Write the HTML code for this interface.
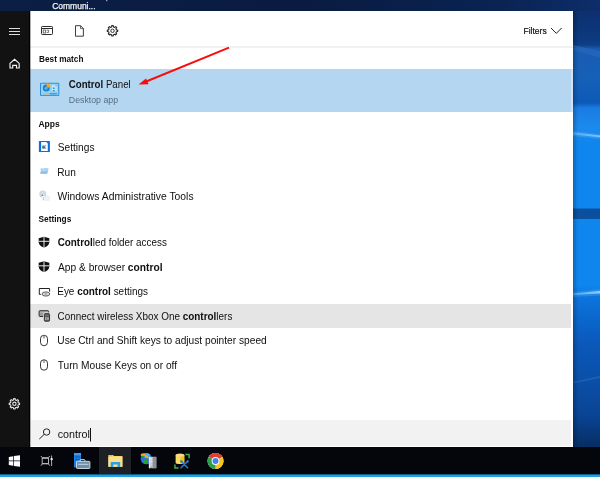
<!DOCTYPE html>
<html><head><meta charset="utf-8"><title>Search</title>
<style>
*{box-sizing:border-box;margin:0;padding:0}
html,body{width:600px;height:477px;overflow:hidden;background:#0a3f8f}
body{position:relative;font-family:"Liberation Sans",sans-serif;color:#1b1b1b}
.abs{position:absolute}
#desk{left:0;top:0;width:600px;height:477px;background:linear-gradient(180deg,#0c2e6a 0px,#0c3070 12px,#0c3a80 40px,#0d4088 45px,#1a5cb2 49px,#1560b8 80px,#0c5ab6 103px,#1a7ce2 108px,#1c8aee 128px,#0f86ee 142px,#0e86ee 285px,#0c72da 300px,#0a60c4 330px,#0a58b8 345px,#0b4fa8 380px,#0a4494 415px,#072d64 447px)}
#topband{left:0;top:0;width:600px;height:11px;background:linear-gradient(90deg,#0b1e44 0,#091b40 300px,#0a2352 500px,#0c2b64 573px,#0c2e6a 600px)}
#side{left:0;top:11px;width:30px;height:437px;background:#121212}
#panel{left:30px;top:11px;width:543px;height:436px;background:#fff}
#sep{left:30px;top:46px;width:543px;height:2px;background:#f1f1f1}
#best{left:30px;top:69px;width:543px;height:43px;background:linear-gradient(90deg,#b4d6f1 0,#b4d6f1 541px,#cfe3f5 541px)}
#hov{left:30px;top:304px;width:541px;height:24px;background:#e5e5e5}
#search{left:30px;top:420px;width:541px;height:26px;background:#f2f2f2;border-left:1px solid #fbfbfb}
#task{left:0;top:447px;width:600px;height:28px;background:#04060c}
#taskhl{left:99px;top:447px;width:32px;height:27px;background:#1d2126}
#bline{left:0;top:474px;width:600px;height:3px;background:linear-gradient(180deg,#0f5f8c 0,#0f5f8c 1px,#1aa3ea 1px)}
#ic{position:absolute;left:0;top:0;will-change:transform}
.t{position:absolute;white-space:nowrap;transform-origin:0 50%;will-change:transform}
b{font-weight:bold}
#ic text{font-family:"Liberation Sans",sans-serif;white-space:pre}

</style></head><body>
<div id="desk" class="abs"></div>
<div id="topband" class="abs"></div>
<div id="side" class="abs"></div>
<div id="panel" class="abs"></div>
<div id="sep" class="abs"></div>
<div id="best" class="abs"></div>
<div id="hov" class="abs"></div>
<div id="search" class="abs"></div>
<div id="task" class="abs"></div>
<div id="taskhl" class="abs"></div>
<div id="bline" class="abs"></div>
<svg id="ic" width="600" height="477" viewBox="0 0 600 477">
<!-- desktop rays on right strip -->
<defs>
<linearGradient id="sh1" x1="0" x2="1" y1="0" y2="0"><stop offset="0" stop-color="#000" stop-opacity=".22"/><stop offset="1" stop-color="#000" stop-opacity="0"/></linearGradient>
<linearGradient id="ry" x1="0" x2="1" y1="0" y2="0"><stop offset="0" stop-color="#6fbcf8" stop-opacity=".75"/><stop offset="1" stop-color="#bfe2fd" stop-opacity=".95"/></linearGradient>
</defs>
<g>
<path d="M573 45 L600 51 V58 L573 50Z" fill="#2a6cc0" opacity=".55"/>
<rect x="573" y="208.5" width="27" height="10.5" fill="#0a509f"/>
<path d="M573 132.2 L600 135.4 V137.2 L573 134.4Z" fill="url(#ry)"/>
<path d="M573 131 L600 134 V139 L573 136Z" fill="#4aa6f4" opacity=".45"/>
<path d="M573 293.6 L600 290.8 V293.4 L573 295Z" fill="url(#ry)"/>
<path d="M573 292 L600 289 V295.5 L573 297Z" fill="#4aa6f4" opacity=".35"/>
<path d="M573 382 L600 376 V378 L573 383.2Z" fill="#3f80d0" opacity=".35"/>
<rect x="573" y="11" width="5" height="436" fill="url(#sh1)"/>
</g>
<!-- sidebar icons -->
<rect x="30" y="11" width="1" height="436" fill="#000" opacity=".3"/>
<rect x="106.3" y="0" width="1" height="1.2" fill="#cfd3da"/>
<rect x="29" y="11" width="1" height="437" fill="#000"/>
<g stroke="#dcdcdc" stroke-width="1" fill="none">
<path d="M9 28.5H20M9 31.5H20M9 34.5H20"/>
<path d="M10 63.4 L14.6 59.3 L19.2 63.4 V68 H16.5 V65.4 H12.7 V68 H10Z" stroke="#f4f4f4" stroke-width="1.15" stroke-linejoin="miter"/>
</g>
<g stroke="#e4e4e4" fill="none" stroke-linejoin="round">
<path d="M13.44 399.92L13.67 398.65L15.13 398.65L15.36 399.92L16.46 400.37L17.52 399.64L18.56 400.68L17.83 401.74L18.28 402.84L19.55 403.07L19.55 404.53L18.28 404.76L17.83 405.86L18.56 406.92L17.52 407.96L16.46 407.23L15.36 407.68L15.13 408.95L13.67 408.95L13.44 407.68L12.34 407.23L11.28 407.96L10.24 406.92L10.97 405.86L10.52 404.76L9.25 404.53L9.25 403.07L10.52 402.84L10.97 401.74L10.24 400.68L11.28 399.64L12.34 400.37Z" stroke-width="1.15"/>
<circle cx="14.4" cy="403.8" r="1.7" stroke-width="1.1"/>
</g>
<!-- toolbar icons -->
<g stroke="#2e2e2e" stroke-width="1" fill="none">
<rect x="41.5" y="26.5" width="11" height="8" rx="0.8"/>
<path d="M41.5 28.5H52.5"/>
<rect x="43.2" y="30" width="2.2" height="3" stroke-width=".8" stroke="#555"/>
<path d="M46.5 30.2H48.6V32.4H46.5" stroke-width=".8" stroke="#555"/>
<path d="M75.5 25.7H80.6L83.4 28.5V36.2H75.5Z" stroke-width=".95" stroke="#333"/>
<path d="M80.5 25.7V28.6H83.4" stroke-width=".8" stroke="#444"/>
</g>
<g stroke="#262626" fill="none" stroke-linejoin="round" stroke-width="1.15">
<path d="M111.54 26.92L111.77 25.65L113.23 25.65L113.46 26.92L114.56 27.37L115.62 26.64L116.66 27.68L115.93 28.74L116.38 29.84L117.65 30.07L117.65 31.53L116.38 31.76L115.93 32.86L116.66 33.92L115.62 34.96L114.56 34.23L113.46 34.68L113.23 35.95L111.77 35.95L111.54 34.68L110.44 34.23L109.38 34.96L108.34 33.92L109.07 32.86L108.62 31.76L107.35 31.53L107.35 30.07L108.62 29.84L109.07 28.74L108.34 27.68L109.38 26.64L110.44 27.37Z" stroke-width="1.15"/>
<circle cx="112.5" cy="30.8" r="1.7" stroke-width=".95"/>
</g>
<!-- filters chevron -->
<path d="M551 28 L556.3 33.4 L561.6 28" stroke="#222" stroke-width="1" fill="none"/>
<!-- control panel icon -->
<g>
<rect x="40" y="82.7" width="19.3" height="13.4" rx="1" fill="#2f8fd6"/>
<rect x="41" y="83.7" width="17.3" height="11.4" fill="#8fd4f8"/>
<circle cx="46.3" cy="88" r="3.5" fill="#1c7fd0"/>
<circle cx="46" cy="88.3" r="1.5" fill="#59b4ec"/>
<path d="M46.6 87.6 V83.6 A4 4 0 0 1 50.6 87.6Z" fill="#f9a61c"/>
<rect x="43" y="93.2" width="6" height="1.2" fill="#f1b23a"/>
<rect x="49.5" y="93.2" width="7.5" height="1.2" fill="#2f8fd6"/>
<rect x="52" y="85" width="5" height="6" fill="#b8e4fb"/>
<rect x="53" y="87.6" width="1.6" height="1.4" fill="#2f8fd6"/>
<rect x="53" y="90" width="1.6" height="1.4" fill="#2f8fd6"/>
<rect x="55.4" y="85" width="1.6" height="1.2" fill="#f1a030"/>
</g>
<!-- settings app icon -->
<rect x="38.9" y="141" width="11" height="11" rx=".6" fill="#0d6fdc"/>
<path d="M41.1 142.1 H46.3 L47.8 143.6 V151 H41.1Z" fill="#fdfdfb"/>
<rect x="42.2" y="145" width="3.9" height="1.6" fill="#8fc0f5"/>
<path d="M42.2 146.2 L44.4 146.2 L46.1 148.4 H42.2Z" fill="#3a6a68"/>
<rect x="42.2" y="148" width="3.9" height=".7" fill="#7fb4ee"/>
<!-- run icon (faint) -->
<defs><filter id="bl" x="-20%" y="-20%" width="140%" height="140%"><feGaussianBlur stdDeviation=".45"/></filter></defs>
<g filter="url(#bl)">
<path d="M40.6 168.3 L43 168.6 L45.5 168.1 L48.6 168.6 L48 171.5 L47 173.7 L40.4 173.8 L40.8 171Z" fill="#a4d1f4"/>
<path d="M40.6 171.8 L47.6 171.2 L47 173.7 L40.4 173.8Z" fill="#86c2f0"/>
<path d="M42.5 170 L45.5 170.4" stroke="#e9d8e2" stroke-width=".8"/>
</g>
<!-- admin tools icon (faint) -->
<g filter="url(#bl)" opacity=".8">
<rect x="41.8" y="195.6" width="8" height="5.4" fill="#ededee"/>
<circle cx="42.8" cy="194" r="2.5" fill="none" stroke="#bfcedb" stroke-width="2"/>
<path d="M39.6 194H46M42.8 190.8V197M40.5 191.8L45 196.2M45 191.8L40.5 196.2" stroke="#c6d4e0" stroke-width="1"/>
<circle cx="42.3" cy="195.2" r=".8" fill="#555"/>
<rect x="42" y="196" width="2.8" height="5" fill="#f4f6f8"/>
<circle cx="43.5" cy="197.7" r=".55" fill="#4a9be8"/>
<circle cx="43.5" cy="199.3" r=".55" fill="#4a9be8"/>
</g>
<!-- shields -->
<g id="sh">
<path d="M38.7 238.3 L44 236.7 L49.3 238.3 V242 C49.3 244.8 47 246.6 44 247.5 C41 246.6 38.7 244.8 38.7 242Z" fill="#111"/>
<path d="M44 237V247.3M38.9 241.3H49.1" stroke="#fff" stroke-width=".9"/>
</g>
<use href="#sh" y="24.5"/>
<!-- eye control -->
<g fill="none" stroke="#222" stroke-width="1">
<path d="M40.8 294.4H39.3V288.5H49.6V291.6"/>
</g>
<ellipse cx="45.9" cy="294" rx="3.9" ry="2.1" fill="#dcdcdc" stroke="#4a4a4a" stroke-width=".9"/>
<circle cx="45.9" cy="294" r="1.1" fill="#a0a0a0"/>
<!-- devices icon -->
<g>
<rect x="39.1" y="310.7" width="9.5" height="5.8" rx=".7" fill="#9a9a9a" stroke="#333" stroke-width="1"/>
<path d="M40.2 312.2H47.5" stroke="#c8c8c8" stroke-width=".8"/>
<rect x="44.3" y="313.7" width="5.3" height="7.5" rx=".7" fill="#4d4d4d" stroke="#f4f4f4" stroke-width="2.4"/>
<rect x="44.3" y="313.7" width="5.3" height="7.5" rx=".7" fill="#555" stroke="#303030" stroke-width="1"/>
<path d="M45.9 317V320.2M48 317V320.2" stroke="#ededed" stroke-width=".9"/>
<path d="M45.6 315.3H46.4M47.6 315.3H48.4" stroke="#ddd" stroke-width=".8"/>
</g>
<!-- mice -->
<g id="ms" fill="none" stroke="#2a2a2a" stroke-width=".95">
<rect x="40.5" y="335.3" width="7" height="10.4" rx="3.4"/>
<path d="M44 335.6V338.6" stroke="#777" stroke-width="1.2"/>
</g>
<use href="#ms" y="24.5"/>
<!-- search magnifier -->
<g fill="none" stroke="#222" stroke-width="1">
<circle cx="46.6" cy="432" r="3.2"/>
<path d="M44.3 434.3 L39.3 439"/>
</g>
<!-- caret -->
<rect x="90" y="428" width="1" height="13.5" fill="#111"/>
<!-- red arrow -->
<g>
<path d="M229 47.7 L145 82" stroke="#f80c0c" stroke-width="1.9" fill="none"/>
<path d="M138.6 84.6 L146 78.4 L148.6 84.3Z" fill="#f80c0c"/>
</g>
<!-- taskbar: windows logo -->
<g fill="#fff">
<path d="M8.8 456.9 L13.3 456.2 V460.6 H8.8Z"/>
<path d="M14 456.1 L20 455.2 V460.6 H14Z"/>
<path d="M8.8 461.3 H13.3 V465.8 L8.8 465.1Z"/>
<path d="M14 461.3 H20 V466.8 L14 465.9Z"/>
</g>
<!-- task view -->
<g fill="none" stroke="#b4b4b4" stroke-width="1">
<rect x="42.2" y="458" width="6.3" height="5.6"/>
<path d="M42 458H48.7M42 463.6H48.7" stroke-width="1.3"/>
<path d="M40.9 456L42.2 457.6M49.8 456L48.5 457.6M40.9 465.7L42.2 464M49.8 465.7L48.5 464"/>
<path d="M51.6 455.5V466" stroke="#bdbdbd" stroke-width=".9"/>
</g>
<circle cx="51.6" cy="459.1" r="1.2" fill="#f2f2f2"/>
<!-- server manager -->
<g>
<rect x="74" y="453" width="7" height="14.4" fill="#1f7fe0"/>
<rect x="74" y="453" width="7" height="2" fill="#3f9af0"/>
<path d="M75 457H80M75 459.5H80" stroke="#0c4fa0" stroke-width=".8"/>
<rect x="80" y="459.6" width="5" height="2.2" rx="1" fill="none" stroke="#dfe6ee" stroke-width=".9"/>
<rect x="76.5" y="461.3" width="13.4" height="7.2" rx=".8" fill="#6f8ea8" stroke="#d4dfe9" stroke-width=".9"/>
<path d="M78 464.3H88.4" stroke="#c7d4e0" stroke-width="1"/>
</g>
<!-- explorer -->
<g>
<path d="M108.4 455 H113 L114 456 H122.4 V466.8 H108.4Z" fill="#f7d56e"/>
<rect x="108.4" y="456.8" width="14" height="10" fill="#fbe08a"/>
<path d="M110.7 466.9 V462 H120.2 V466.9 H117.6 V464.4 H113.3 V466.9Z" fill="#2b9fe8"/>
<rect x="109.4" y="455.3" width="3" height=".9" fill="#e2a92a"/>
</g>
<!-- IIS -->
<g>
<circle cx="146.3" cy="458.7" r="5.6" fill="#2a6fe0"/>
<path d="M142.6 454.6 A5.6 5.6 0 0 1 150.6 455 L148 457.5 L144 456.5Z" fill="#4fb8e8" opacity=".8"/>
<path d="M143.2 460.2 q2.2 -1.6 4 .2 q1.2 1.8 -.4 3.2 q-2.6 .6 -3.6 -1.2z M141.6 455.6 q1.6 -.8 2.2 .6 q-.6 1.2 -2 1z" fill="#22a838"/>
<path d="M140.8 454.2 q2 -1.6 3.8 -.4 L146.4 455.4 L147.8 454 L148.6 458.4 L144.2 457.8 L145.4 456.6 q-2 -1.4 -4.6 -.6z" fill="#f5a51a"/>
<rect x="148.9" y="456.8" width="7.4" height="11.4" fill="#c9cdd1"/>
<rect x="152.6" y="457.2" width="3.7" height="11" fill="#8a9096"/>
<rect x="148.9" y="456.8" width="1.2" height="11.4" fill="#e9ecee"/>
<path d="M150 459H152.4M150 461.6H152.4" stroke="#f8f8f8" stroke-width=".7"/>
<rect x="150.4" y="466.8" width="1.8" height="1.1" fill="#6cc83c"/>
</g>
<!-- SQL tools -->
<g>
<path d="M175.6 455 V462.4 A4.35 1.5 0 0 0 184.3 462.4 V455Z" fill="#f6dc62"/>
<path d="M180.4 455 H184.3 V462.4 A4.35 1.5 0 0 1 180.4 463.9Z" fill="#f1c21c"/>
<ellipse cx="179.95" cy="455" rx="4.35" ry="1.6" fill="#f9d98a"/>
<path d="M185.4 454.4H189.1V458.2" fill="none" stroke="#43a94a" stroke-width="1.5"/>
<path d="M174.9 464.4V468H178.6" fill="none" stroke="#43a94a" stroke-width="1.5"/>
<path d="M181.2 461.2L187.6 467.8M187.8 461.2L181 467.8" stroke="#1a7fd8" stroke-width="1.6" stroke-linecap="round"/>
<circle cx="181.4" cy="461.4" r="1.2" fill="#1a7fd8"/><circle cx="187.6" cy="461.4" r="1.2" fill="#1a7fd8"/>
</g>
<!-- chrome -->
<g>
<circle cx="215.5" cy="461" r="8" fill="#fff"/>
<path d="M215.5 461 L208.57 457 A8 8 0 0 1 222.43 457Z" fill="#e53e30"/>
<path d="M215.5 453 A8 8 0 0 1 222.43 457 L215.5 457Z" fill="#e53e30"/>
<path d="M215.5 461 L222.43 457 A8 8 0 0 1 215.5 469Z" fill="#f8c51c"/>
<path d="M215.5 461 L215.5 469 A8 8 0 0 1 208.57 457Z" fill="#2f9e4a"/>
<circle cx="215.5" cy="461" r="3.9" fill="#fff"/>
<circle cx="215.5" cy="461" r="3" fill="#3f84ec"/>
</g>
<g id="tx">
<text x="52.20" y="9.1" font-size="8.5" fill="#f2f2f2" textLength="43.40" lengthAdjust="spacingAndGlyphs" stroke="#f2f2f2" stroke-width=".25">Communi...</text>
<text x="39.08" y="61.7" font-size="9.2" fill="#0f0f0f" textLength="44.36" lengthAdjust="spacingAndGlyphs"><tspan font-weight="bold">Best match</tspan></text>
<text x="68.72" y="88.0" font-size="10.1" fill="#111" textLength="61.98" lengthAdjust="spacingAndGlyphs"><tspan font-weight="bold">Control</tspan> Panel</text>
<text x="68.80" y="102.5" font-size="9.1" fill="#566c81" textLength="49.28" lengthAdjust="spacingAndGlyphs">Desktop app</text>
<text x="38.40" y="126.8" font-size="9.2" fill="#0f0f0f" textLength="21.36" lengthAdjust="spacingAndGlyphs"><tspan font-weight="bold">Apps</tspan></text>
<text x="57.76" y="150.8" font-size="10.1" fill="#0f0f0f" textLength="36.79" lengthAdjust="spacingAndGlyphs">Settings</text>
<text x="57.30" y="175.5" font-size="10.1" fill="#0f0f0f" textLength="18.58" lengthAdjust="spacingAndGlyphs">Run</text>
<text x="57.56" y="199.8" font-size="10.1" fill="#0f0f0f" textLength="136.01" lengthAdjust="spacingAndGlyphs">Windows Administrative Tools</text>
<text x="38.60" y="222.3" font-size="9.2" fill="#0f0f0f" textLength="32.70" lengthAdjust="spacingAndGlyphs"><tspan font-weight="bold">Settings</tspan></text>
<text x="57.70" y="246.3" font-size="10.1" fill="#0f0f0f" textLength="109.13" lengthAdjust="spacingAndGlyphs"><tspan font-weight="bold">Control</tspan>led folder access</text>
<text x="58.00" y="270.8" font-size="10.1" fill="#0f0f0f" textLength="104.54" lengthAdjust="spacingAndGlyphs">App &amp; browser <tspan font-weight="bold">control</tspan></text>
<text x="57.26" y="295.3" font-size="10.1" fill="#0f0f0f" textLength="90.66" lengthAdjust="spacingAndGlyphs">Eye <tspan font-weight="bold">control</tspan> settings</text>
<text x="57.59" y="319.9" font-size="10.1" fill="#0f0f0f" textLength="174.76" lengthAdjust="spacingAndGlyphs">Connect wireless Xbox One <tspan font-weight="bold">control</tspan>lers</text>
<text x="57.30" y="344.4" font-size="10.1" fill="#0f0f0f" textLength="209.43" lengthAdjust="spacingAndGlyphs">Use Ctrl and Shift keys to adjust pointer speed</text>
<text x="57.71" y="368.9" font-size="10.1" fill="#0f0f0f" textLength="119.35" lengthAdjust="spacingAndGlyphs">Turn Mouse Keys on or off</text>
<text x="57.74" y="438.0" font-size="11" fill="#0f0f0f" textLength="32.18" lengthAdjust="spacingAndGlyphs">control</text>
<text x="523.49" y="33.5" font-size="9" fill="#0f0f0f" textLength="23.20" lengthAdjust="spacingAndGlyphs" stroke="#0f0f0f" stroke-width=".2">Filters</text>
</g>
</svg>

</body></html>
